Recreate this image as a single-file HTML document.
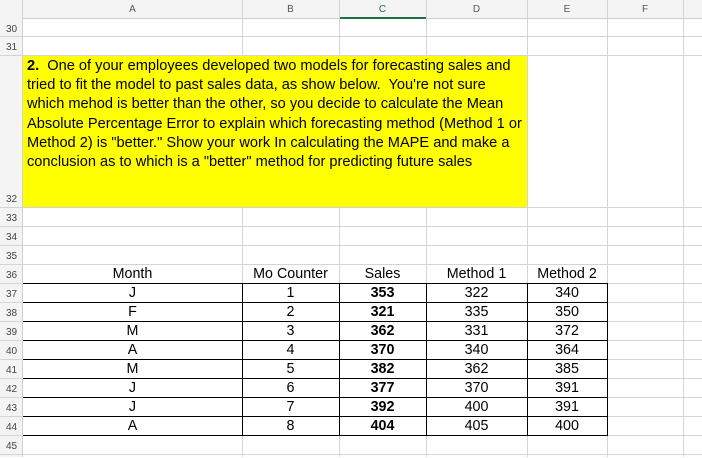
<!DOCTYPE html>
<html><head><meta charset="utf-8"><style>
*{margin:0;padding:0;box-sizing:border-box}
body{width:702px;height:457px;background:#fff;position:relative;overflow:hidden;font-family:"Liberation Sans",Arial,sans-serif}
.a{position:absolute}
.vl{position:absolute;width:1px;background:#d4d4d4}
.hl{position:absolute;height:1px;background:#d4d4d4}
.ch{position:absolute;top:0;height:19px;font-size:10px;color:#555;text-align:center;line-height:19px}
.rn{position:absolute;left:0;width:23px;font-size:10px;color:#444;text-align:center;height:19px;line-height:22px}
.c{position:absolute;font-size:14.3px;text-align:center;height:19px;line-height:20px;color:#000}
</style></head><body>
<div class="a" style="left:0;top:0;width:702px;height:19px;background:#f4f4f4;border-bottom:1px solid #d0d0d0"></div>
<div class="a" style="left:0;top:0;width:23px;height:457px;background:#f4f4f4;border-right:1px solid #d0d0d0"></div>
<div class="a" style="left:339px;top:17px;width:88px;height:2px;background:#1e7145"></div>
<div class="ch" style="left:23px;width:219px">A</div>
<div class="ch" style="left:242px;width:97px">B</div>
<div class="ch" style="left:339px;width:87px;color:#1e7145">C</div>
<div class="ch" style="left:426px;width:101px">D</div>
<div class="ch" style="left:527px;width:80px">E</div>
<div class="ch" style="left:607px;width:76px">F</div>
<div class="vl" style="left:242px;top:0;height:457px"></div>
<div class="vl" style="left:339px;top:0;height:457px"></div>
<div class="vl" style="left:426px;top:0;height:457px"></div>
<div class="vl" style="left:527px;top:0;height:457px"></div>
<div class="vl" style="left:607px;top:0;height:457px"></div>
<div class="vl" style="left:683px;top:0;height:457px"></div>
<div class="hl" style="left:0;top:36px;width:702px"></div>
<div class="hl" style="left:0;top:55px;width:702px"></div>
<div class="hl" style="left:0;top:207px;width:702px"></div>
<div class="hl" style="left:0;top:226px;width:702px"></div>
<div class="hl" style="left:0;top:245px;width:702px"></div>
<div class="hl" style="left:0;top:264px;width:702px"></div>
<div class="hl" style="left:0;top:283px;width:702px"></div>
<div class="hl" style="left:0;top:302px;width:702px"></div>
<div class="hl" style="left:0;top:321px;width:702px"></div>
<div class="hl" style="left:0;top:340px;width:702px"></div>
<div class="hl" style="left:0;top:359px;width:702px"></div>
<div class="hl" style="left:0;top:378px;width:702px"></div>
<div class="hl" style="left:0;top:397px;width:702px"></div>
<div class="hl" style="left:0;top:416px;width:702px"></div>
<div class="hl" style="left:0;top:435px;width:702px"></div>
<div class="hl" style="left:0;top:454px;width:702px"></div>
<div class="a" style="left:23px;top:56px;width:504px;height:151px;background:#ffff00;padding:1px 0 0 4px;font-size:14.6px;line-height:19.2px;color:#000;white-space:nowrap"><b>2.</b>&nbsp; One of your employees developed two models for forecasting sales and<br>tried to fit the model to past sales data, as show below.&nbsp; You're not sure<br>which mehod is better than the other, so you decide to calculate the Mean<br>Absolute Percentage Error to explain which forecasting method (Method 1 or<br>Method 2) is "better." Show your work In calculating the MAPE and make a<br>conclusion as to which is a "better" method for predicting future sales</div>
<div class="rn" style="top:19px">30</div><div class="rn" style="top:37px">31</div>
<div class="rn" style="top:189px">32</div><div class="rn" style="top:208px">33</div>
<div class="rn" style="top:227px">34</div><div class="rn" style="top:246px">35</div>
<div class="rn" style="top:265px">36</div><div class="rn" style="top:284px">37</div>
<div class="rn" style="top:303px">38</div><div class="rn" style="top:322px">39</div>
<div class="rn" style="top:341px">40</div><div class="rn" style="top:360px">41</div>
<div class="rn" style="top:379px">42</div><div class="rn" style="top:398px">43</div>
<div class="rn" style="top:417px">44</div><div class="rn" style="top:436px">45</div>
<div class="a" style="left:23px;top:283px;width:585px;height:153px;border:1px solid #000;border-left:none"></div>
<div class="a" style="left:23px;top:302px;width:585px;height:1px;background:#000"></div>
<div class="a" style="left:23px;top:321px;width:585px;height:1px;background:#000"></div>
<div class="a" style="left:23px;top:340px;width:585px;height:1px;background:#000"></div>
<div class="a" style="left:23px;top:359px;width:585px;height:1px;background:#000"></div>
<div class="a" style="left:23px;top:378px;width:585px;height:1px;background:#000"></div>
<div class="a" style="left:23px;top:397px;width:585px;height:1px;background:#000"></div>
<div class="a" style="left:23px;top:416px;width:585px;height:1px;background:#000"></div>
<div class="a" style="left:242px;top:283px;width:1px;height:153px;background:#000"></div>
<div class="a" style="left:339px;top:283px;width:1px;height:153px;background:#000"></div>
<div class="a" style="left:426px;top:283px;width:1px;height:153px;background:#000"></div>
<div class="a" style="left:527px;top:283px;width:1px;height:153px;background:#000"></div>
<div class="c" style="left:23px;top:264px;width:219px">Month</div>
<div class="c" style="left:242px;top:264px;width:97px">Mo Counter</div>
<div class="c" style="left:339px;top:264px;width:87px">Sales</div>
<div class="c" style="left:426px;top:264px;width:101px">Method 1</div>
<div class="c" style="left:527px;top:264px;width:80px">Method 2</div>
<div class="c" style="left:23px;top:283px;width:219px">J</div><div class="c" style="left:242px;top:283px;width:97px">1</div><div class="c" style="left:339px;top:283px;width:87px"><b>353</b></div><div class="c" style="left:426px;top:283px;width:101px">322</div><div class="c" style="left:527px;top:283px;width:80px">340</div>
<div class="c" style="left:23px;top:302px;width:219px">F</div><div class="c" style="left:242px;top:302px;width:97px">2</div><div class="c" style="left:339px;top:302px;width:87px"><b>321</b></div><div class="c" style="left:426px;top:302px;width:101px">335</div><div class="c" style="left:527px;top:302px;width:80px">350</div>
<div class="c" style="left:23px;top:321px;width:219px">M</div><div class="c" style="left:242px;top:321px;width:97px">3</div><div class="c" style="left:339px;top:321px;width:87px"><b>362</b></div><div class="c" style="left:426px;top:321px;width:101px">331</div><div class="c" style="left:527px;top:321px;width:80px">372</div>
<div class="c" style="left:23px;top:340px;width:219px">A</div><div class="c" style="left:242px;top:340px;width:97px">4</div><div class="c" style="left:339px;top:340px;width:87px"><b>370</b></div><div class="c" style="left:426px;top:340px;width:101px">340</div><div class="c" style="left:527px;top:340px;width:80px">364</div>
<div class="c" style="left:23px;top:359px;width:219px">M</div><div class="c" style="left:242px;top:359px;width:97px">5</div><div class="c" style="left:339px;top:359px;width:87px"><b>382</b></div><div class="c" style="left:426px;top:359px;width:101px">362</div><div class="c" style="left:527px;top:359px;width:80px">385</div>
<div class="c" style="left:23px;top:378px;width:219px">J</div><div class="c" style="left:242px;top:378px;width:97px">6</div><div class="c" style="left:339px;top:378px;width:87px"><b>377</b></div><div class="c" style="left:426px;top:378px;width:101px">370</div><div class="c" style="left:527px;top:378px;width:80px">391</div>
<div class="c" style="left:23px;top:397px;width:219px">J</div><div class="c" style="left:242px;top:397px;width:97px">7</div><div class="c" style="left:339px;top:397px;width:87px"><b>392</b></div><div class="c" style="left:426px;top:397px;width:101px">400</div><div class="c" style="left:527px;top:397px;width:80px">391</div>
<div class="c" style="left:23px;top:416px;width:219px">A</div><div class="c" style="left:242px;top:416px;width:97px">8</div><div class="c" style="left:339px;top:416px;width:87px"><b>404</b></div><div class="c" style="left:426px;top:416px;width:101px">405</div><div class="c" style="left:527px;top:416px;width:80px">400</div>
</body></html>
